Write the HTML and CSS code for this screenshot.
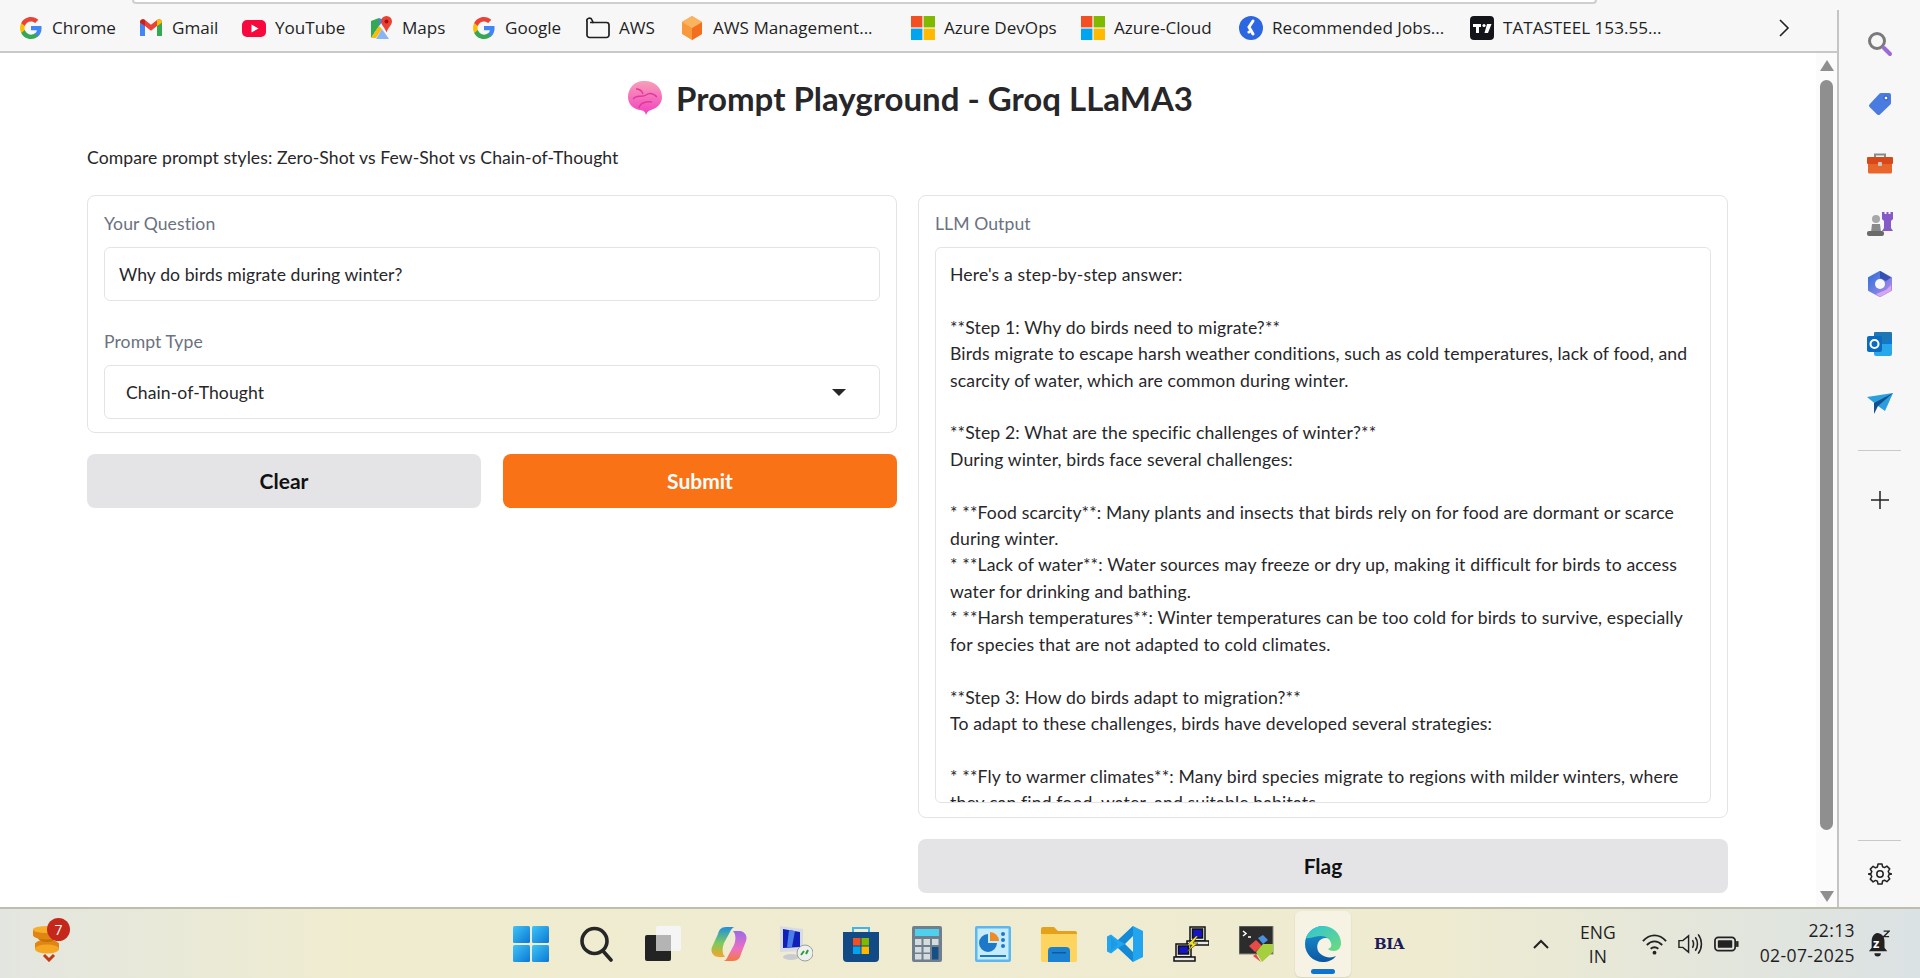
FILE: index.html
```html
<!DOCTYPE html>
<html lang="en">
<head>
  <meta charset="UTF-8">
  <title>Prompt Playground - Groq LLaMA3</title>
  <link rel="stylesheet" href="styles.css">
</head>
<body>
  <svg class="defs" width="0" height="0">
    <defs>
      <symbol id="g-logo" viewBox="0 0 24 24">
        <path fill="#4285F4" d="M22.56 12.25c0-.78-.07-1.53-.2-2.25H12v4.26h5.92c-.26 1.37-1.04 2.53-2.21 3.31v2.77h3.57c2.08-1.92 3.28-4.74 3.28-8.09z"/>
        <path fill="#34A853" d="M12 23c2.97 0 5.46-.98 7.28-2.66l-3.57-2.77c-.98.66-2.23 1.06-3.71 1.06-2.86 0-5.29-1.93-6.16-4.53H2.18v2.84C3.99 20.53 7.7 23 12 23z"/>
        <path fill="#FBBC05" d="M5.84 14.09c-.22-.66-.35-1.36-.35-2.09s.13-1.43.35-2.09V7.07H2.18C1.43 8.55 1 10.22 1 12s.43 3.45 1.18 4.93l2.85-2.22.81-.62z"/>
        <path fill="#EA4335" d="M12 5.38c1.62 0 3.06.56 4.21 1.64l3.15-3.15C17.45 2.09 14.97 1 12 1 7.7 1 3.99 3.47 2.18 7.07l3.66 2.84c.87-2.6 3.3-4.53 6.16-4.53z"/>
      </symbol>
      <symbol id="ms-logo" viewBox="0 0 24 24">
        <rect x="0" y="0" width="11.4" height="11.4" fill="#f25022"/>
        <rect x="12.6" y="0" width="11.4" height="11.4" fill="#7fba00"/>
        <rect x="0" y="12.6" width="11.4" height="11.4" fill="#00a4ef"/>
        <rect x="12.6" y="12.6" width="11.4" height="11.4" fill="#ffb900"/>
      </symbol>
      <linearGradient id="win-blue" x1="0" y1="0" x2="1" y2="1">
        <stop offset="0" stop-color="#3fc4f7"/><stop offset="1" stop-color="#0a78d4"/>
      </linearGradient>
      <linearGradient id="copilot-a" x1="0" y1="0" x2="0" y2="1">
        <stop offset="0" stop-color="#1f8fe0"/><stop offset=".55" stop-color="#7ecb5a"/><stop offset="1" stop-color="#f9a22b"/>
      </linearGradient>
      <linearGradient id="copilot-b" x1="0" y1="0" x2="0" y2="1">
        <stop offset="0" stop-color="#9b6bea"/><stop offset=".6" stop-color="#ee6fc0"/><stop offset="1" stop-color="#f47a3c"/>
      </linearGradient>
      <linearGradient id="edge-a" x1="0" y1="0" x2="1" y2="1">
        <stop offset="0" stop-color="#2fc3d8"/><stop offset="1" stop-color="#6edb7c"/>
      </linearGradient>
      <linearGradient id="edge-b" x1="0" y1="0" x2="0" y2="1">
        <stop offset="0" stop-color="#1c9ad6"/><stop offset="1" stop-color="#0b57a4"/>
      </linearGradient>
      <linearGradient id="brain" x1="0" y1="0" x2="0" y2="1">
        <stop offset="0" stop-color="#f8a0b8"/><stop offset="1" stop-color="#f23fc0"/>
      </linearGradient>
      <linearGradient id="hex" x1="0" y1="0" x2="1" y2="1">
        <stop offset="0" stop-color="#2f6fd8"/><stop offset=".5" stop-color="#6f7fe4"/><stop offset="1" stop-color="#c488e6"/>
      </linearGradient>
    </defs>
  </svg>

  <div class="window">
    <div class="main-col">
      <div class="top-bar">
        <div class="omnibox"></div>
        <nav class="bookmarks">
          <a class="bm"><svg class="bm-icon"><use href="#g-logo"/></svg><span>Chrome</span></a>
          <a class="bm"><svg class="bm-icon" viewBox="0 0 24 24"><path fill="#4285F4" d="M1 20V6l5 4v10z"/><path fill="#34A853" d="M23 20V6l-5 4v10z"/><path fill="#EA4335" d="M1 6.500C1 3.500 4 2.500 6 4l6 4.700L18 4c2-1.500 5-.5 5 2.500L18 10l-6 4.700L6 10z"/><path fill="#FBBC05" d="M18 4c2-1.500 5-.5 5 2.500L18 10z"/><path fill="#C5221F" d="M1 6.500C1 3.500 4 2.500 6 4v6z"/></svg><span>Gmail</span></a>
          <a class="bm"><svg class="bm-icon" viewBox="0 0 24 24"><rect x="0" y="4" width="24" height="17" rx="5" fill="#f7083d"/><path fill="#fff" d="M9.500 8.500v8l7-4z"/></svg><span>YouTube</span></a>
          <a class="bm"><svg class="bm-icon" viewBox="0 0 24 24"><path fill="#34a853" d="M2 5l8-3v8l-8 12z"/><path fill="#fbbc05" d="M2 22l8-12 3 3-6 9z"/><path fill="#8ab4f8" d="M7 23l6-10 7 10z"/><path fill="#4285f4" d="M10 2l5 2-5 6z"/><path fill="#ea4335" d="M17.500 0a5.500 5.500 0 0 1 5.500 5.500c0 3.500-4 6-5.500 11-1.500-5-5.500-7.500-5.500-11A5.500 5.500 0 0 1 17.500 0z"/><circle cx="17.500" cy="5.500" r="2" fill="#a50e0e"/></svg><span>Maps</span></a>
          <a class="bm"><svg class="bm-icon"><use href="#g-logo"/></svg><span>Google</span></a>
          <a class="bm"><svg class="bm-icon" viewBox="0 0 24 24"><path fill="none" stroke="#1f1f1f" stroke-width="1.700" d="M1 5.500a2.500 2.500 0 0 1 5 -1.500l1 2.500h13.500a2.500 2.500 0 0 1 2.500 2.500v10a2.500 2.500 0 0 1-2.500 2.500h-17A2.500 2.500 0 0 1 1 19z"/><path stroke="#1f1f1f" stroke-width="1.500" d="M4 6.500h3.500"/></svg><span>AWS</span></a>
          <a class="bm"><svg class="bm-icon" viewBox="0 0 24 24"><path fill="#f89a3c" d="M12 0l10 6v12l-10 6-10-6V6z"/><path fill="#f26f1f" d="M12 12l10-6v12l-10 6z"/><path fill="#fbb360" d="M12 12L2 6l10-6 10 6z"/></svg><span>AWS Management...</span></a>
          <a class="bm"><svg class="bm-icon"><use href="#ms-logo"/></svg><span>Azure DevOps</span></a>
          <a class="bm"><svg class="bm-icon"><use href="#ms-logo"/></svg><span>Azure-Cloud</span></a>
          <a class="bm"><svg class="bm-icon" viewBox="0 0 24 24"><circle cx="12" cy="12" r="12" fill="#2c66e0"/><path fill="none" stroke="#fff" stroke-width="3" stroke-linecap="round" d="M14 5l-4 6 4 7"/><circle cx="10" cy="16" r="1.600" fill="#fff"/></svg><span>Recommended Jobs...</span></a>
          <a class="bm"><svg class="bm-icon" viewBox="0 0 24 24"><rect width="24" height="24" rx="4" fill="#14151b"/><path fill="#fff" d="M3 8h8v3H9v6H6v-6H3z"/><circle cx="14" cy="9.500" r="1.600" fill="#fff"/><path fill="#fff" d="M17 8h4.500l-3.500 9h-3.500z"/></svg><span>TATASTEEL 153.55...</span></a>
          <svg class="bm-more" viewBox="0 0 12 20"><path fill="none" stroke="#1f1f1f" stroke-width="1.600" d="M2 2l8 8-8 8"/></svg>
        </nav>
      </div>

      <div class="viewport">
        <main class="page">
          <h1 class="title">
            <svg class="brain" viewBox="0 0 36 36"><path fill="url(#brain)" d="M18 1C9 0 1 7 1 17c0 7 5 12 12 13 3 .5 5 1 6 5 1.500-3 2-4 5-5 7-2 11-7 11-13C35 8 28 1 18 1z"/><path fill="none" stroke="#e0389f" stroke-width="1.400" d="M6 19c4-5 9-1 13-4M12 28c1-5 7-7 13-6M19 15c4-3 8-1 11 2M9 9c4 0 6 2 7 5"/></svg>
            <span>Prompt Playground - Groq LLaMA3</span>
          </h1>
          <p class="subtitle">Compare prompt styles: Zero-Shot vs Few-Shot vs Chain-of-Thought</p>

          <div class="columns">
            <section class="col">
              <div class="panel form-panel">
                <div class="field">
                  <label class="field-label">Your Question</label>
                  <div class="input">Why do birds migrate during winter?</div>
                </div>
                <div class="field">
                  <label class="field-label">Prompt Type</label>
                  <div class="input select">
                    <span>Chain-of-Thought</span>
                    <i class="caret"></i>
                  </div>
                </div>
              </div>
              <div class="btn-row">
                <button class="btn">Clear</button>
                <button class="btn primary">Submit</button>
              </div>
            </section>

            <section class="col">
              <div class="panel">
                <label class="field-label">LLM Output</label>
                <div class="output">Here's a step-by-step answer:

**Step 1: Why do birds need to migrate?**
Birds migrate to escape harsh weather conditions, such as cold temperatures, lack of food, and
scarcity of water, which are common during winter.

**Step 2: What are the specific challenges of winter?**
During winter, birds face several challenges:

* **Food scarcity**: Many plants and insects that birds rely on for food are dormant or scarce
during winter.
* **Lack of water**: Water sources may freeze or dry up, making it difficult for birds to access
water for drinking and bathing.
* **Harsh temperatures**: Winter temperatures can be too cold for birds to survive, especially
for species that are not adapted to cold climates.

**Step 3: How do birds adapt to migration?**
To adapt to these challenges, birds have developed several strategies:

* **Fly to warmer climates**: Many bird species migrate to regions with milder winters, where
they can find food, water, and suitable habitats.</div>
              </div>
              <button class="btn">Flag</button>
            </section>
          </div>
        </main>
        <div class="scrollbar">
          <i class="arrow up"></i>
          <div class="thumb"></div>
          <i class="arrow down"></i>
        </div>
      </div>
    </div>

    <aside class="sidebar">
      <div class="side-btn"><svg viewBox="0 0 26 26"><circle cx="10" cy="10" r="7.500" fill="none" stroke="#7a7a7a" stroke-width="3"/><path stroke="#9a6ad8" stroke-width="4" stroke-linecap="round" d="M17 17l6 6"/></svg></div>
      <div class="side-btn"><svg viewBox="0 0 26 26"><path fill="#4a7be0" d="M14 2h8a2 2 0 0 1 2 2v8a2 2 0 0 1-.6 1.400L13 23.400a2 2 0 0 1-2.800 0L2.600 16a2 2 0 0 1 0-2.800L12.600 2.600A2 2 0 0 1 14 2z"/><circle cx="19" cy="7" r="2" fill="#fff" stroke="#1f4fb0"/></svg></div>
      <div class="side-btn"><svg viewBox="0 0 26 26"><path fill="none" stroke="#8a8a8a" stroke-width="2" d="M8 7V3.500h10V7"/><rect x="0" y="6" width="26" height="7" rx="1" fill="#d8491a"/><path fill="#e8662b" d="M1 13h24v8a1.500 1.500 0 0 1-1.500 1.500h-21A1.500 1.500 0 0 1 1 21z"/><rect x="11" y="11" width="4" height="4" rx="1" fill="#c8c8c8"/></svg></div>
      <div class="side-btn"><svg viewBox="0 0 26 26"><path fill="#8559c7" d="M15 1h2.500v2h2V1h2v2h2V1H26v7l-2 2v7l2 3H15l2-3v-7l-2-2z"/><circle cx="9" cy="8" r="4" fill="#a8a8a8"/><path fill="#8a8a8a" d="M5 13h8l1 8H4z"/><rect x="0" y="20" width="17" height="5" rx="2" fill="#6a6a6a"/></svg></div>
      <div class="side-btn"><svg viewBox="0 0 26 26"><path fill="url(#hex)" stroke="url(#hex)" stroke-width="2" stroke-linejoin="round" d="M13 1l11 6v12l-11 6-11-6V7z"/><path fill="#1f3f9a" opacity=".7" d="M13 0l11 6.500-5 3.500-6-3z"/><path fill="#d6a6ee" d="M24 14v5.500L13 26l-4-3 10-4z"/><circle cx="13" cy="13" r="5" fill="#f7f7f7"/></svg></div>
      <div class="side-btn"><svg viewBox="0 0 26 26"><rect x="7" y="1" width="18" height="24" rx="2" fill="#28a8ea"/><path fill="#0f78d4" d="M15 13l10-6v6z"/><path fill="#14447d" opacity=".5" d="M7 1h18v6l-10 6-8-6z"/><rect x="0" y="5" width="15" height="16" rx="2" fill="#0a6cc1"/><circle cx="7.500" cy="13" r="4" fill="none" stroke="#fff" stroke-width="2"/></svg></div>
      <div class="side-btn"><svg viewBox="0 0 26 22"><path fill="#2a9fe0" d="M0 4l26-4-8 18-7-5z"/><path fill="#134f8f" d="M7 10L26 0 11 13l-4 8z"/></svg></div>
      <hr class="side-sep">
      <div class="side-btn plus"><svg viewBox="0 0 20 20"><path stroke="#222" stroke-width="1.500" d="M10 1v18M1 10h18"/></svg></div>
      <div class="side-bottom">
        <hr class="side-sep">
        <div class="side-btn gear"><svg viewBox="0 0 24 24"><path fill="none" stroke="#222" stroke-width="1.500" stroke-linejoin="round" d="M10 2h4l.6 2.800 1.900.8 2.400-1.500 2.800 2.800-1.500 2.400.8 1.900L23.800 12l-2.800 .6-.8 1.900 1.500 2.400-2.800 2.800-2.400-1.500-1.900.8L14 22h-4l-.6-2.800-1.900-.8-2.400 1.500-2.800-2.800 1.500-2.400-.8-1.900L.2 12l2.800-.6.8-1.900-1.500-2.400 2.800-2.800 2.400 1.500 1.900-.8z"/><circle cx="12" cy="12" r="3.200" fill="none" stroke="#222" stroke-width="1.500"/></svg></div>
      </div>
    </aside>
  </div>

  <footer class="taskbar">
    <div class="tray-left">
      <div class="coins">
        <svg viewBox="0 0 34 36"><ellipse cx="15" cy="19" rx="12" ry="5.500" fill="#e08512"/><rect x="3" y="17" width="24" height="6" fill="#e08512"/><ellipse cx="15" cy="23" rx="12" ry="4.500" fill="#f5a623"/><ellipse cx="15" cy="12" rx="9" ry="4" fill="#c96f0a"/><rect x="1" y="3" width="28" height="6" fill="#e08512"/><ellipse cx="15" cy="9" rx="14" ry="4.500" fill="#e08512"/><ellipse cx="15" cy="3.500" rx="14" ry="3.500" fill="#f9ae2b"/><path fill="none" stroke="#c23a12" stroke-width="3" d="M12 29l5 5 5-5"/></svg>
        <span class="badge">7</span>
      </div>
    </div>
    <div class="apps">
      <div class="app"><svg class="w35" viewBox="0 0 36 36"><rect width="17" height="17" rx="1.500" fill="url(#win-blue)"/><rect x="19" width="17" height="17" rx="1.500" fill="url(#win-blue)"/><rect y="19" width="17" height="17" rx="1.500" fill="url(#win-blue)"/><rect x="19" y="19" width="17" height="17" rx="1.500" fill="url(#win-blue)"/></svg></div>
      <div class="app"><svg class="w35" viewBox="0 0 36 36"><circle cx="15.500" cy="15" r="12.500" fill="none" stroke="#262626" stroke-width="3.600"/><path stroke="#262626" stroke-width="3.600" stroke-linecap="round" d="M24 25l8 9"/></svg></div>
      <div class="app"><svg class="w35" viewBox="0 0 36 36"><rect x="11" y="0" width="25" height="25" rx="2" fill="#f5f5f5"/><rect x="0" y="9" width="26" height="26" rx="2" fill="#232323"/><rect x="11" y="9" width="15" height="16" fill="#b4b4b4"/></svg></div>
      <div class="app"><svg class="w35" viewBox="0 0 36 36"><path fill="url(#copilot-a)" d="M15 1C10 1 8 4 7 8L1 21c-2 6 2 10 7 10h6c-3-3-3-9-1-14l6-11c1-3 3-5 5-5z"/><path fill="url(#copilot-b)" d="M22 35c5 0 7-3 8-7l5-13c2-6-2-10-7-10h-6c3 3 3 9 1 14l-6 11c-1 3-3 5-5 5z"/></svg></div>
      <div class="app"><svg class="w35" viewBox="0 0 36 36"><path fill="#d8dce2" d="M3 0l23 3v22L3 26z"/><path fill="#1020b8" d="M6 3l17 3v15L6 22z"/><path fill="#4a7fe8" d="M12 4l6 1-3 16h-5z"/><ellipse cx="14" cy="31" rx="8" ry="3" fill="#c8ccd0"/><circle cx="28" cy="27" r="8" fill="#eef0ee" stroke="#9aa0a0"/><path fill="none" stroke="#2f9a3c" stroke-width="2" d="M24 29l3-4M31 24l-2 4"/></svg></div>
      <div class="app"><svg class="w35" viewBox="0 0 36 36"><path fill="none" stroke="#3fb4e8" stroke-width="2" d="M10 8V2h16v6"/><path fill="#114a85" d="M0 6h36v26a4 4 0 0 1-4 4H4a4 4 0 0 1-4-4z"/><rect x="10" y="12" width="7.500" height="7.500" fill="#f25022"/><rect x="18.500" y="12" width="7.500" height="7.500" fill="#7fba00"/><rect x="10" y="20.500" width="7.500" height="7.500" fill="#00a4ef"/><rect x="18.500" y="20.500" width="7.500" height="7.500" fill="#ffb900"/></svg></div>
      <div class="app"><svg class="w35" viewBox="0 0 30 36"><rect width="30" height="36" rx="2" fill="#6f7f8c"/><rect x="3" y="3" width="24" height="7" fill="#4fd0ee"/><g fill="#d5dce0"><rect x="3" y="13" width="6.500" height="6"/><rect x="11.500" y="13" width="6.500" height="6"/><rect x="20" y="13" width="6.500" height="6"/><rect x="3" y="21" width="6.500" height="5.500"/><rect x="11.500" y="21" width="6.500" height="5.500"/><rect x="3" y="28" width="6.500" height="5.500"/><rect x="11.500" y="28" width="6.500" height="5.500"/></g><rect x="20" y="21" width="6.500" height="12.500" fill="#154f88"/></svg></div>
      <div class="app"><svg class="w35" viewBox="0 0 36 36"><rect width="36" height="36" rx="2" fill="#5bb8ee"/><rect x="2.500" y="2.500" width="31" height="31" fill="#c6ebfb"/><path fill="#1e78c8" d="M13 8a9 9 0 1 0 9 9h-9z"/><path fill="#f08a24" d="M15 6a9 9 0 0 1 9 9h-9z"/><g fill="#1e78c8"><circle cx="28" cy="8" r="2"/><circle cx="28" cy="14" r="2"/><circle cx="28" cy="20" r="2"/></g><rect x="5" y="29" width="26" height="2" fill="#1e78c8"/></svg></div>
      <div class="app"><svg class="w35" viewBox="0 0 36 36"><path fill="#e3a21a" d="M0 3a2 2 0 0 1 2-2h11l4 4h17a2 2 0 0 1 2 2v5H0z"/><path fill="#fdd45d" d="M0 8h36v26a2 2 0 0 1-2 2H2a2 2 0 0 1-2-2z"/><path fill="#1b82d2" d="M7 36V25a4 4 0 0 1 4-4h14a4 4 0 0 1 4 4v11z"/><rect x="11" y="26" width="14" height="1.500" fill="#0e5a9e"/></svg></div>
      <div class="app"><svg class="w35" viewBox="0 0 36 36"><path fill="#22a5ee" d="M26 0l10 5v26l-10 5-15-14-7 5.500-4-2v-15l4-2 7 5.500z"/><path fill="#0a75c4" d="M26 0v36l-15-14 7-4-7-4z" opacity=".55"/><path fill="#0e8ad8" d="M4 11l7 7-7 7z" opacity=".35"/><path fill="#f0ecd2" d="M26 10v16l-8-8z"/></svg></div>
      <div class="app"><svg class="w35" viewBox="0 0 36 36"><g stroke="#111" stroke-width="1.500"><rect x="17" y="1" width="15" height="14" fill="#e8e8e8"/><rect x="19.500" y="3" width="10" height="9" fill="#1414c8"/><path fill="#e8e8e8" d="M14 15h22v4H14z"/><rect x="3" y="18" width="15" height="13" fill="#e8e8e8"/><rect x="5.500" y="20" width="10" height="8" fill="#1414c8"/><path fill="#e8e8e8" d="M1 31h21v4H1z"/></g><path fill="#f7e11a" stroke="#333" stroke-width=".6" d="M23 10l-9 9 5 0-5 7 11-9-5 0 5-7z"/></svg></div>
      <div class="app"><svg class="w35" viewBox="0 0 36 36"><rect width="34" height="28" fill="#2c2c2c" stroke="#8a8a8a"/><path fill="none" stroke="#fff" stroke-width="1.500" d="M4 5l3 2.500-3 2.500M9 11h3"/><path fill="#e84a4a" d="M10 20l7-6 6 6-7 6z"/><path fill="#4a8fe0" d="M19 12l5-3 5 5-5 4z"/><path fill="#a6cf3f" d="M17 26l7-8 10 0 0 8-11 10z"/><path fill="#e84a4a" d="M17 28l5 8-8-6z"/></svg></div>
      <div class="app active"><svg class="w35" viewBox="0 0 36 36"><path fill="url(#edge-b)" d="M18 0C8 0 0 8 0 18c0 10 8 18 18 18 5 0 10-2 13-6-4 2-10 2-14-1-4-2.500-6-7-4-12 2-5 8-6 12-4-1-8-7-15-7-15z"/><path fill="url(#edge-a)" d="M18 0c9 0 18 7 18 17 0 5-3 8-7 8-3 0-5-1-6-2 3-1 4-3 3-6-1-4-5-7-10-7C11 10 5 13 1 12 3 5 10 0 18 0z"/></svg><i class="running"></i></div>
      <div class="app"><span class="bia">BIA</span></div>
    </div>
    <div class="tray-right">
      <svg class="tray-up" viewBox="0 0 18 12"><path fill="none" stroke="#222" stroke-width="2" d="M2 10l7-7 7 7"/></svg>
      <div class="lang"><span>ENG</span><span>IN</span></div>
      <div class="status-icons">
        <svg viewBox="0 0 26 24"><g fill="none" stroke="#222" stroke-width="2"><path d="M1 9c7-8 17-8 24 0"/><path d="M5 13c5-5 11-5 16 0"/><path d="M9 17c3-2.500 5-2.500 8 0"/></g><circle cx="13" cy="21" r="2" fill="#222"/></svg>
        <svg viewBox="0 0 26 24"><path fill="none" stroke="#222" stroke-width="1.500" d="M1 8.500h4l6-5v17l-6-5H1z"/><g fill="none" stroke="#222" stroke-width="1.600"><path d="M15 8c1.500 2.500 1.500 5.500 0 8"/><path d="M18 5c3 4 3 10 0 14"/><path d="M21 2c4.500 6 4.500 14 0 20"/></g></svg>
        <svg viewBox="0 0 26 24"><rect x="1" y="5" width="21" height="14" rx="3.500" fill="none" stroke="#222" stroke-width="1.800"/><rect x="4" y="8" width="15" height="8" rx="1" fill="#222"/><rect x="23" y="9" width="2.500" height="6" fill="#222"/></svg>
      </div>
      <div class="clock"><span>22:13</span><span>02-07-2025</span></div>
      <div class="bell">
        <svg viewBox="0 0 24 30"><path fill="#222" d="M10 3c5 0 8 4 8 9v7l3 4H1l3-4v-7c0-5 3-9 6-9z"/><path fill="#222" d="M7 25h7a3.500 3.500 0 0 1-7 0z"/><path fill="none" stroke="#222" stroke-width="1.500" d="M17 1h6l-6 6h6"/></svg>
        <span class="zz">z</span>
      </div>
    </div>
  </footer>
</body>
</html>
```

FILE: styles.css
```css
* { margin: 0; padding: 0; box-sizing: border-box; }

:root {
  --text: #27272a;
  --label: #6b7280;
  --line: #e4e4e7;
  --chrome: #f7f7f7;
  --ui-font: "Lato", "Noto Sans", sans-serif;
  --win-font: "Open Sans", "Noto Sans", sans-serif;
}

html, body {
  width: 1920px;
  height: 978px;
  overflow: hidden;
}

body {
  background: var(--chrome);
  color: var(--text);
  font-family: var(--ui-font);
  font-size: 17.6px;
  letter-spacing: 0.07px;
  display: flex;
  flex-direction: column;
}

.defs { position: absolute; }

.window {
  flex: 1;
  min-height: 0;
  display: flex;
}

.main-col {
  width: 1837px;
  display: flex;
  flex-direction: column;
}

/* browser chrome */
.top-bar {
  height: 53px;
  background: var(--chrome);
  border-bottom: 2px solid #c8c8c8;
}

.omnibox {
  height: 4px;
  margin: 0 240px 0 132px;
  background: #fff;
  border: 2px solid #cfcfcf;
  border-top: none;
  border-radius: 0 0 10px 10px;
}

.bookmarks {
  height: 47px;
  padding: 0 47px 0 19px;
  display: grid;
  grid-template-columns: 120px 103px 127px 103px 114px 94px 231px 170px 158px 231px 1fr 12px;
  align-items: center;
}

.bm {
  display: flex;
  align-items: center;
  gap: 9px;
  font-family: var(--win-font);
  font-size: 17.1px;
  letter-spacing: 0;
  color: #1f1f1f;
  white-space: nowrap;
}

.bm-icon {
  width: 24px;
  height: 24px;
  flex: none;
}

.bm-more {
  width: 12px;
  height: 20px;
}

.viewport {
  flex: 1;
  min-height: 0;
  display: flex;
  background: #fff;
}

.page {
  flex: 1;
  padding: 22px 0 0 87px;
}

.title {
  height: 46px;
  width: 1641px;
  padding-left: 5px;
  display: flex;
  align-items: center;
  justify-content: center;
  gap: 13px;
  font-size: 33px;
  font-weight: 700;
  line-height: 46px;
  letter-spacing: 0;
  color: var(--text);
}

.brain {
  width: 36px;
  height: 36px;
}

.subtitle {
  margin-top: 24px;
  line-height: 26px;
  color: var(--text);
}

.columns {
  margin-top: 24px;
  display: grid;
  grid-template-columns: 810px 810px;
  gap: 21px;
}

.col {
  display: flex;
  flex-direction: column;
  gap: 21px;
}

.panel {
  border: 1px solid var(--line);
  border-radius: 8px;
  padding: 15px 16px 14px;
  background: #fff;
}

.form-panel {
  padding-bottom: 13px;
  display: flex;
  flex-direction: column;
  gap: 28px;
}

.field-label {
  display: block;
  line-height: 26px;
  margin-bottom: 10px;
  color: var(--label);
}

.input {
  height: 54px;
  border: 1px solid var(--line);
  border-radius: 6px;
  padding: 0 14px;
  display: flex;
  align-items: center;
  color: var(--text);
}

.select {
  padding: 0 33px 0 21px;
  justify-content: space-between;
}

.caret {
  width: 0;
  height: 0;
  border-left: 7px solid transparent;
  border-right: 7px solid transparent;
  border-top: 7px solid #27272a;
}

.btn-row {
  display: grid;
  grid-template-columns: 1fr 1fr;
  gap: 22px;
}

.btn {
  height: 54px;
  padding-bottom: 2px;
  border: none;
  border-radius: 8px;
  background: var(--line);
  color: #111;
  font-family: var(--ui-font);
  font-size: 21px;
  font-weight: 700;
}

.btn.primary {
  background: #f97316;
  color: #fff;
}

.output {
  height: 556px;
  overflow: hidden;
  border: 1px solid var(--line);
  border-radius: 6px;
  padding: 14px 14px 0;
  line-height: 26.4px;
  letter-spacing: 0.14px;
  white-space: pre;
  color: var(--text);
}

.scrollbar {
  width: 21px;
  background: #fbfbfb;
  display: flex;
  flex-direction: column;
  align-items: center;
  padding: 7px 0 5px;
}

.thumb {
  width: 13px;
  flex: 1;
  margin: 9px 0 61px;
  border-radius: 7px;
  background: #8f8f8f;
}

.arrow {
  width: 0;
  height: 0;
  border-left: 7px solid transparent;
  border-right: 7px solid transparent;
}

.arrow.up { border-bottom: 11px solid #8f8f8f; }
.arrow.down { border-top: 11px solid #8f8f8f; }

/* edge sidebar */
.sidebar {
  flex: 1;
  margin-top: 10px;
  padding-top: 4px;
  border-left: 2px solid #c4c4c4;
  display: flex;
  flex-direction: column;
  align-items: center;
}

.side-btn {
  width: 100%;
  height: 60px;
  flex: none;
  display: flex;
  align-items: center;
  justify-content: center;
}

.side-btn svg {
  width: 26px;
  height: 26px;
}

.side-sep {
  width: 43px;
  border: none;
  border-top: 1px solid #c9c9c9;
  margin-top: 16px;
  flex: none;
}

.side-btn.plus { margin-top: 19px; }
.side-btn.plus svg { width: 20px; height: 20px; }

.side-bottom {
  margin-top: auto;
  width: 100%;
  display: flex;
  flex-direction: column;
  align-items: center;
  padding-bottom: 3px;
}

.side-bottom .side-sep { margin: 0 0 3px; }

.side-btn.gear svg { width: 24px; height: 24px; }

/* windows taskbar */
.taskbar {
  height: 71px;
  flex: none;
  display: flex;
  align-items: center;
  border-top: 2px solid #bfbeac;
  background: linear-gradient(90deg, #e3e6e0 0%, #efecd0 18%, #eeebd1 75%, #dbe2e4 100%);
  font-family: var(--win-font);
  letter-spacing: 0;
  color: #1f1f1f;
}

.tray-left {
  width: 498px;
  padding-left: 32px;
  flex: none;
}

.coins {
  position: relative;
  width: 34px;
  height: 36px;
}

.coins svg {
  width: 34px;
  height: 36px;
}

.badge {
  position: absolute;
  top: -8px;
  left: 15px;
  width: 23px;
  height: 23px;
  border-radius: 50%;
  background: #c4281b;
  color: #fff;
  font-size: 14px;
  line-height: 23px;
  text-align: center;
}

.apps {
  display: flex;
  align-items: center;
}

.app {
  position: relative;
  width: 66px;
  height: 66px;
  display: flex;
  align-items: center;
  justify-content: center;
}

.w35 {
  width: 36px;
  height: 36px;
}

.app.active {
  width: 56px;
  margin: 0 5px;
  background: #f6f3e4;
  border-radius: 6px;
  box-shadow: 0 1px 2px rgba(0, 0, 0, 0.1);
}

.running {
  position: absolute;
  left: 16px;
  bottom: 3px;
  width: 24px;
  height: 5px;
  border-radius: 3px;
  background: #0f73d0;
}

.bia {
  font-family: "DejaVu Serif", serif;
  font-weight: 700;
  font-size: 15px;
  letter-spacing: -0.4px;
  color: #1e1b5a;
}

.tray-right {
  margin-left: auto;
  padding-right: 30px;
  display: flex;
  align-items: center;
}

.tray-up {
  width: 18px;
  height: 12px;
}

.lang {
  margin-left: 30px;
  display: flex;
  flex-direction: column;
  align-items: center;
  font-size: 17.5px;
  line-height: 24px;
}

.status-icons {
  margin-left: 26px;
  display: flex;
  gap: 11px;
}

.status-icons svg {
  width: 25px;
  height: 24px;
}

.clock {
  margin: -2px 0 0 21px;
  display: flex;
  flex-direction: column;
  align-items: flex-end;
  font-size: 17.5px;
  line-height: 25px;
  letter-spacing: 0.4px;
}

.bell {
  position: relative;
  width: 22px;
  height: 28px;
  margin-left: 13px;
}

.bell svg {
  width: 22px;
  height: 28px;
}

.zz {
  position: absolute;
  top: 6px;
  left: 5px;
  color: #fff;
  font-size: 13px;
  line-height: 14px;
  font-weight: 700;
}
```
